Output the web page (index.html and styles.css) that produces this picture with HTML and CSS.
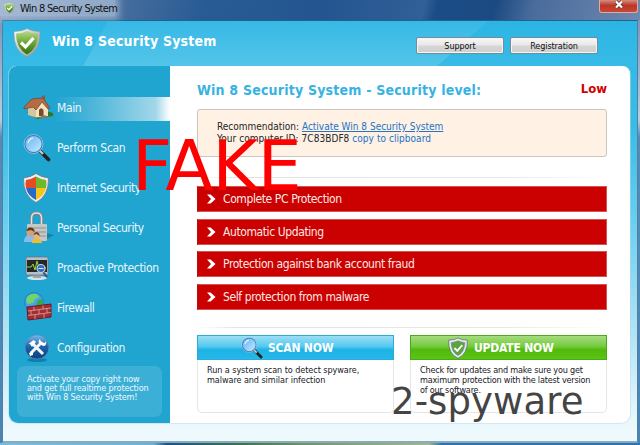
FILE: index.html
```html
<!DOCTYPE html>
<html lang="en">
<head>
  <meta charset="UTF-8">
  <meta name="viewport" content="width=device-width, initial-scale=1.0">
  <title>Win 8 Security System</title>
  <link rel="stylesheet" href="styles.css">
</head>
<body>
  <svg class="defs" width="0" height="0">
    <defs>
      <linearGradient id="silver" x2="1" y2="1"><stop stop-color="#fff"/><stop offset="1" stop-color="#85909a"/></linearGradient>
      <linearGradient id="green" x2="0" y2="1"><stop stop-color="#b9d88c"/><stop offset=".5" stop-color="#69a832"/><stop offset="1" stop-color="#2f6d0c"/></linearGradient>
      <linearGradient id="lens" x2="1" y2="1"><stop stop-color="#5eb0f2"/><stop offset="1" stop-color="#c8edff"/></linearGradient>
      <linearGradient id="ball" x2="0" y2="1"><stop stop-color="#7ab8e6"/><stop offset=".5" stop-color="#1b62a8"/><stop offset="1" stop-color="#0b3f80"/></linearGradient>
    </defs>
    <symbol id="shield" viewBox="0 0 28 30">
      <path d="M14 1Q19 4 27 4Q28 23 14 29.500Q0 23 1 4Q9 4 14 1Z" fill="url(#silver)" stroke="#8d9b8d" stroke-width=".6"/>
      <path d="M14 3.500Q19 6 25 6Q25 21 14 27Q3 21 3 6Q9 6 14 3.500Z" fill="url(#green)"/>
      <path d="M8 15L12.500 19.500L20.500 10.500" fill="none" stroke="#fff" stroke-width="3.200"/>
    </symbol>
    <symbol id="magnifier" viewBox="0 0 28 28">
      <path d="M17 17L25.500 25.500" stroke="#222" stroke-width="3.600" stroke-linecap="round"/>
      <path d="M16 16L20 20" stroke="#c3c8cc" stroke-width="2.400"/>
      <circle cx="10.500" cy="10" r="8.800" fill="url(#lens)" stroke="#3779b5" stroke-width="1.400"/>
      <circle cx="10.500" cy="10" r="9.500" fill="none" stroke="#c4dff2" stroke-width=".6"/>
      <path d="M5 9Q6 5 10 4" fill="none" stroke="#d9f1ff" stroke-width="1.500"/>
    </symbol>
  </svg>

  <div class="window">
    <header class="titlebar">
      <div class="caption"><svg class="caption-icon"><use href="#shield"/></svg><span>Win 8 Security System</span></div>
      <button class="close"><svg width="10" height="9" viewBox="0 0 10 9"><path d="M2 1.500L8 7.500M8 1.500L2 7.500" stroke="#6b2a24" stroke-width="3.600"/><path d="M2 1.500L8 7.500M8 1.500L2 7.500" stroke="#fff" stroke-width="2.200"/></svg></button>
    </header>

    <div class="client">
      <div class="banner">
        <svg class="banner-logo"><use href="#shield"/></svg>
        <h1>Win 8 Security System</h1>
        <div class="buttons"><button class="btn"><span>Support</span></button><button class="btn"><span>Registration</span></button></div>
      </div>

      <div class="panel">
        <nav class="sidebar">
          <a class="item active">
            <svg viewBox="0 0 30 30">
              <path d="M4 19L14 26L30 23V20L18 17Z" fill="#347421"/>
              <path d="M5 14V22L13 24.500V14L9 9Z" fill="#d8c59b"/>
              <path d="M13 24.500V15L19 8L25 15V23Z" fill="#f2e3be"/>
              <path d="M19 2.500H22V9H19Z" fill="#806148"/>
              <path d="M1 14L9 6L20 5L27 15L25 16L19 9L13 17L10 14L1 16Z" fill="#b56b43" stroke="#77452f" stroke-width=".8"/>
              <path d="M16 23V17Q18 13.500 20.500 17V23.500Z" fill="#764b2d"/>
              <path d="M20 22L28 24L15 26Z" fill="#84796a"/>
            </svg><span>Main</span></a>
          <a class="item wide"><svg viewBox="0 0 30 30"><use href="#magnifier" x="0" y="1" width="28" height="28"/></svg><span>Perform Scan</span></a>
          <a class="item">
            <svg viewBox="0 0 30 30">
              <path d="M13 .5Q18 4 25.500 5Q26 23 13 29.500Q0 23 .5 5Q8 4 13 .5Z" fill="#eceff2" stroke="#67727f" stroke-width=".8"/>
              <path d="M13 3.500V15H3Q2 10 3 7Q9 6 13 3.500Z" fill="#e24d23"/>
              <path d="M13 3.500Q17 6 23 7Q24 11 23 15H13Z" fill="#70b72e"/>
              <path d="M3 15H13V27Q5 23 3 15Z" fill="#226acb"/>
              <path d="M13 15H23Q21 23 13 27Z" fill="#f7c51a"/>
            </svg><span>Internet Security</span></a>
          <a class="item">
            <svg viewBox="0 0 30 30">
              <path d="M20 19L31 22L22 27Z" fill="#116c94" opacity=".6"/>
              <path d="M8.500 14V5Q8.500 0 13.500 0Q18.500 0 18.500 5V14" fill="none" stroke="#7d8588" stroke-width="3.400"/>
              <path d="M8.500 14V5Q8.500 0 13.500 0Q18.500 0 18.500 5V14" fill="none" stroke="#e0e2df" stroke-width="1.500"/>
              <rect x="4" y="11" width="20" height="17" rx="1" fill="#c6c8c5"/>
              <path d="M5 15H23M5 19H23M5 23H23" stroke="#8d928f"/>
              <path d="M1 29Q1 22 7 22Q12 22 13 29Z" fill="#8bbbe8"/>
              <circle cx="7.500" cy="19" r="4" fill="#d7a070"/><path d="M3.500 18Q4 14 8 14.500Q12 15 11.500 19L8 17Z" fill="#613c28"/>
              <path d="M9 30Q9 25 14 25Q18 25 19 30Z" fill="#f0be27"/>
              <circle cx="13.500" cy="23" r="3" fill="#e7b485"/><path d="M10.500 22Q11 19 14 19Q17 20 16.500 23L13.500 21Z" fill="#714627"/>
            </svg><span>Personal Security</span></a>
          <a class="item wide">
            <svg viewBox="0 0 30 30">
              <ellipse cx="14" cy="25" rx="10" ry="2" fill="#d6e2e8"/><path d="M10 20H18V25H10Z" fill="#9ba5aa"/>
              <rect x="3" y="4" width="22" height="18" rx="1.500" fill="#b8bec2" stroke="#65717a" stroke-width=".7"/>
              <rect x="4" y="7" width="20" height="12" fill="#232828"/>
              <path d="M4 14H8L10 11L12 17L14 8L16 15H23" fill="none" stroke="#9ed831"/>
              <path d="M20 19L24 24" stroke="#334e79" stroke-width="2"/><circle cx="18" cy="15.500" r="4" fill="#3869b6" stroke="#b9d7f2" stroke-width="1.200"/><path d="M15.500 15.500H20.500" stroke="#dceaff"/>
            </svg><span>Proactive Protection</span></a>
          <a class="item">
            <svg viewBox="0 0 30 30">
              <circle cx="11" cy="9" r="9.300" fill="#4f9ff0" stroke="#1973b8" stroke-width=".8"/>
              <path d="M4 4Q8 0 14 1L16 4L12 6L10 10L5 11L3 8Z" fill="#6fd566"/><path d="M15 7L19.500 6Q21 11 17 15L13 12Z" fill="#32ad43"/>
              <path d="M4 14L28 11V24L5 27Z" fill="#a32d35" stroke="#6e1820"/>
              <path d="M5 18L28 15M5 22.500L28 19.500M11 14V17.500M20 12.500V16M8 18V22M16 17V21M24 15.500V20M12 22V26M21 21V25" stroke="#dda9a0" stroke-width=".8"/>
            </svg><span>Firewall</span></a>
          <a class="item">
            <svg viewBox="0 0 30 30">
              <ellipse cx="14" cy="27" rx="10" ry="2" fill="#126b99" opacity=".7"/>
              <circle cx="14" cy="14" r="12" fill="url(#ball)" stroke="#5394c6" stroke-width=".7"/>
              <path d="M8 20L19 9M10 11L20 21" stroke="#f4f5f6" stroke-width="3"/>
              <path d="M5.500 11L10.500 7L13 9L9 14L7 11Z" fill="#fff"/><path d="M17 6L18 9L22 10L23 8Q24 13 20 13L16 10Q15 7 17 6Z" fill="#fff"/><path d="M6 20L10 18V22L7 23Z" fill="#fff"/>
            </svg><span>Configuration</span></a>
          <p class="promo">Activate your copy right now<br>and get full realtime protection<br>with Win 8 Security System!</p>
        </nav>

        <main>
          <div class="heading"><h2>Win 8 Security System - Security level:</h2><strong>Low</strong></div>
          <div class="notice">
            <div>Recommendation: <a class="under">Activate Win 8 Security System</a></div>
            <div class="computer">Your computer ID: 7C83BDF8 <a>copy to clipboard</a></div>
          </div>
          <hr>
          <ul class="alerts">
            <li><svg viewBox="0 0 10 10"><path d="M0 0H4L9.500 5L4 10H0L4.500 5Z"/></svg><span>Complete PC Protection</span></li>
            <li><svg viewBox="0 0 10 10"><path d="M0 0H4L9.500 5L4 10H0L4.500 5Z"/></svg><span>Automatic Updating</span></li>
            <li><svg viewBox="0 0 10 10"><path d="M0 0H4L9.500 5L4 10H0L4.500 5Z"/></svg><span>Protection against bank account fraud</span></li>
            <li><svg viewBox="0 0 10 10"><path d="M0 0H4L9.500 5L4 10H0L4.500 5Z"/></svg><span>Self protection from malware</span></li>
          </ul>
          <hr>
          <div class="cards">
            <section class="card scan">
              <h3><svg width="22" height="22"><use href="#magnifier"/></svg><span>SCAN NOW</span></h3>
              <p>Run a system scan to detect spyware,<br>malware and similar infection</p>
            </section>
            <section class="card update">
              <h3><svg width="20" height="22" viewBox="0 0 28 30"><path d="M14 1Q19 4 27 4Q28 23 14 29.500Q0 23 1 4Q9 4 14 1Z" fill="#e5ebee" stroke="#5c6671"/><path d="M14 5Q19 7 23.500 7.500Q23 21 14 25.500Q5 21 4.500 7.500Q9 7 14 5Z" fill="#5ba33b" stroke="#7c8997"/><path d="M9 15L13 19L20 11" fill="none" stroke="#fff" stroke-width="2.600"/></svg><span>UPDATE NOW</span></h3>
              <p>Check for updates and make sure you get<br>maximum protection with the latest version<br>of our software.</p>
            </section>
          </div>
        </main>
      </div>
    </div>
  </div>
  <div class="stamp fake">FAKE</div>
  <div class="stamp site">2-spyware</div>
</body>
</html>
```
FILE: styles.css
```css
* {
  box-sizing: border-box;
}
body {
  margin: 0;
  width: 640px;
  height: 445px;
  overflow: hidden;
  position: relative;
  background: linear-gradient(90deg, #72bfe6, #62b4df 24%, #175390 26%, #39784b 38%, #6f9867 48%, #9cba89 67%, #2674b8 69%, #2674b8);
  font-family: "DejaVu Sans Condensed", "DejaVu Sans", sans-serif;
  font-stretch: condensed;
}
h1, h2, h3, p, ul {
  margin: 0;
  padding: 0;
}
span, h1, h2, .heading strong {
  white-space: nowrap;
}
.defs {
  position: absolute;
}
.window {
  height: 443px;
  padding: 0 2px;
  background: linear-gradient(#6f8cb3, #b8cee0 27%, #5989b5 31%, #4785b7);
}
.titlebar {
  height: 20px;
  margin: 0 -2px;
  display: flex;
  justify-content: space-between;
  background: linear-gradient(105deg, #8099bd, #4b709f 17%, #285b94 32%, #245590 50%, #315f97 66%, #1c4c86 68%, #1b4a82 77%, #4a6c9c 83%, #6e88ae);
}
.caption {
  display: flex;
  align-items: center;
  height: 16px;
  width: 115px;
  gap: 5px;
  padding-left: 4px;
  font-size: 11px;
  letter-spacing: -.7px;
  color: #111;
  background: rgba(190, 206, 227, .6);
  box-shadow: 0 0 7px 4px rgba(190, 206, 227, .6);
}
.caption-icon {
  flex: none;
  width: 11px;
  height: 12px;
}
.close {
  width: 39px;
  height: 13px;
  margin-right: 2px;
  padding: 0 0 3px;
  border: 1px solid #e3a9a1;
  border-top: 0;
  border-radius: 0 0 3px 3px;
  background: linear-gradient(#d48d80, #bd3726 45%, #c54835);
  display: flex;
  justify-content: center;
  align-items: flex-end;
}
.client {
  height: 423px;
  border: 1px solid #53809e;
  border-top-color: #23628a;
  border-bottom: 2px solid #8ba9b8;
  padding: 0 7px 0 6px;
  background: linear-gradient(#30b8e5, #38bce7 25%, #69cff1 48%, #b3e4f6 75%, #e6f7fd 94%, #f0fafd);
}
.banner {
  position: relative;
  height: 45px;
  margin: 0 -7px 0 -6px;
  display: flex;
  align-items: flex-start;
  background: linear-gradient(#2bb5e4, #38bbe6);
}
/* light band across the banner */
.banner::before {
  content: "";
  position: absolute;
  inset: 0;
  background: linear-gradient(rgba(255, 255, 255, .05), rgba(255, 255, 255, .14));
  clip-path: polygon(105px 0, 485px 0, 434px 45px, 80px 45px);
}
.banner > * {
  position: relative;
}
.banner-logo {
  width: 28px;
  height: 31px;
  margin: 6px 0 0 10px;
}
.banner h1 {
  margin: 11px 0 0 11px;
  width: 250px;
  font-size: 14px;
  line-height: 18px;
  letter-spacing: .2px;
  color: #fff;
}
.buttons {
  display: flex;
  gap: 6px;
  margin: 16px 0 0 114px;
}
.btn {
  width: 88px;
  height: 17px;
  padding: 0;
  border: 1px solid #718d9a;
  border-radius: 2px;
  background: linear-gradient(#f7f7f7, #e8e8e8 48%, #d6d6d6 52%, #cfcfcf);
  box-shadow: inset 0 0 0 1px #f5f5f5;
  font: inherit;
  font-size: 9px;
  line-height: 14px;
  letter-spacing: -.1px;
  color: #111;
}
.panel {
  height: 357px;
  display: flex;
  border-radius: 8px 8px 9px 9px;
  background: #fff;
  box-shadow: 0 0 0 1px rgba(190, 215, 225, .5);
  overflow: hidden;
}
.sidebar {
  width: 161px;
  padding-top: 22px;
  background: #20a4d0;
  flex: none;
}
.item {
  height: 40px;
  display: flex;
  align-items: center;
  gap: 4px;
  padding-left: 14px;
  font-size: 12px;
  letter-spacing: -.4px;
  color: #e8f7fd;
}
.item svg {
  width: 30px;
  height: 30px;
  overflow: visible;
}
.wide {
  letter-spacing: -.3px;
}
.active {
  background: linear-gradient(90deg, transparent 28%, #53b8da 55%, #a2d7e9 91%, #fff) center 9px / 100% 24px no-repeat;
}
.promo {
  width: 145px;
  height: 51px;
  margin: -2px 0 0 8px;
  padding: 9px 0 0 10px;
  border-radius: 7px;
  background: #3bafd5;
  color: #ecf9ff;
  font-size: 9px;
  line-height: 9px;
  letter-spacing: -.15px;
  white-space: nowrap;
}
main {
  width: 410px;
  margin-left: 27px;
}
.heading {
  display: flex;
  justify-content: space-between;
  height: 43px;
  padding-top: 14px;
}
.heading h2 {
  font-size: 14px;
  line-height: 20px;
  letter-spacing: .2px;
  color: #36b3e2;
}
.heading strong {
  font-size: 13px;
  line-height: 18px;
  color: #d20000;
}
.notice {
  height: 48px;
  border: 1px solid #c9c5c0;
  border-radius: 3px;
  background: #fff1e4;
  padding: 11px 0 0 19px;
  font-size: 10px;
  line-height: 12px;
  color: #242424;
  white-space: nowrap;
}
.notice a {
  color: #2373c7;
}
.notice .under {
  text-decoration: underline;
}
.computer {
  letter-spacing: .05px;
}
hr {
  border: 0;
  height: 1px;
  margin: 20px 0 8px;
  background: linear-gradient(90deg, #fff, #e3e3e3 10%, #e8e8e8 75%, #fff);
}
.alerts {
  list-style: none;
  display: grid;
  gap: 6.700px;
}
.alerts li {
  height: 26px;
  display: flex;
  align-items: center;
  gap: 7px;
  padding: 0 0 0 9px;
  border: 1px solid #d95151;
  border-left-color: #bd0b0b;
  background: #cb0000;
  color: #ffe8e4;
  font-size: 12px;
  letter-spacing: -.4px;
}
.alerts svg {
  width: 9px;
  height: 10px;
  fill: #fff;
}
.alerts + hr {
  margin: 17px 0 7px;
}
.cards {
  display: grid;
  grid-template-columns: 197px 197px;
  gap: 16px;
}
.card {
  height: 78px;
  border: 1px solid #e5e5e5;
  border-top: 0;
  border-radius: 0 0 5px 5px;
}
.card h3 {
  height: 25px;
  margin: 0 -1px;
  display: flex;
  align-items: center;
  color: #fff;
  font-size: 12px;
  letter-spacing: -.2px;
}
.scan h3 {
  gap: 5px;
  padding-left: 43px;
  border: 1px solid #2badd6;
  background: linear-gradient(#9bdef5, #55c9ef 45%, #1db2e5 60%, #25b8ea);
}
.update h3 {
  gap: 6px;
  padding-left: 37px;
  border: 1px solid #4ca91a;
  background: linear-gradient(#a5dc7e, #75cb3d 45%, #51b90c 60%, #5ac514);
}
.card p {
  padding: 5px 0 0 9px;
  color: #171725;
  font-size: 9px;
  line-height: 10px;
  letter-spacing: -.06px;
  white-space: nowrap;
}
.update p {
  letter-spacing: -.18px;
}
.stamp {
  position: absolute;
  font-family: "DejaVu Sans", sans-serif;
  font-stretch: normal;
  line-height: 1;
  white-space: nowrap;
}
.fake {
  left: 132px;
  top: 131px;
  font-size: 70px;
  letter-spacing: -.7px;
  color: #f00;
}
.site {
  left: 391px;
  top: 383px;
  font-size: 37px;
  letter-spacing: .1px;
  color: #444;
}
```
